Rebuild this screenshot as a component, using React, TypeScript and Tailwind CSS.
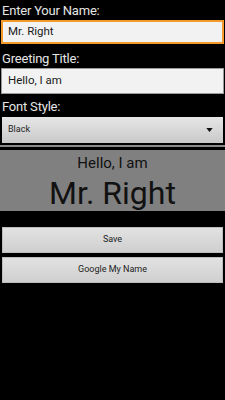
import React from "react";

export default function App() {
  return (
    <div className="w-[225px] h-[400px] bg-black overflow-hidden flex flex-col" style={{ fontFamily: "Roboto, 'Noto Sans', sans-serif" }}>
      <div className="h-[20px] px-[2px] pt-[3px] text-[13px] leading-[16px] tracking-[-0.2px] text-[#e6e6e6]">Enter Your Name:</div>
      <div className="mx-[1px] h-[24px] border-2 border-[#f39a2a] bg-[#f2f2f2] flex items-center px-[5px] text-[11.5px] text-[#1a1a1a]">Mr. Right</div>
      <div className="h-[24px] px-[2px] pt-[7px] text-[13px] leading-[16px] tracking-[-0.2px] text-[#e6e6e6]">Greeting Title:</div>
      <div className="mx-[1px] h-[26px] border border-[#9a9a9a] bg-[#f2f2f2] flex items-center px-[6px] text-[11.5px] text-[#1a1a1a]">Hello, I am</div>
      <div className="h-[23px] px-[2px] pt-[5px] text-[13px] leading-[16px] tracking-[-0.2px] text-[#e6e6e6]">Font Style:</div>
      <div className="mx-[2px] h-[26px] bg-gradient-to-b from-[#e6e6e6] to-[#c9c9c9] flex items-center justify-between pl-[6px] pr-[10px] text-[9px] text-[#222]">
        <span>Black</span>
        <svg width="7" height="4" viewBox="0 0 8 5"><path d="M0 0h8L4 5z" fill="#111" /></svg>
      </div>
      <div className="h-[2px]" />
      <div className="h-[2px] bg-[#8a8a8a]" />
      <div className="h-[3px]" />
      <div className="h-[61px] bg-[#808080] flex flex-col items-center text-[#111]">
        <div className="text-[15px] leading-[18px] mt-[4px]">Hello, I am</div>
        <div className="text-[32px] leading-[32px] mt-[5px]">Mr. Right</div>
      </div>
      <div className="h-[16px]" />
      <div className="flex flex-col gap-[4px] px-[2px]">
        <div className="h-[26px] bg-gradient-to-b from-[#e2e2e2] to-[#cfcfcf] border border-[#bdbdbd] flex items-center justify-center text-[9px] text-[#222]">Save</div>
        <div className="h-[26px] bg-gradient-to-b from-[#e2e2e2] to-[#cfcfcf] border border-[#bdbdbd] flex items-center justify-center text-[9px] text-[#222]">Google My Name</div>
      </div>
    </div>
  );
}
